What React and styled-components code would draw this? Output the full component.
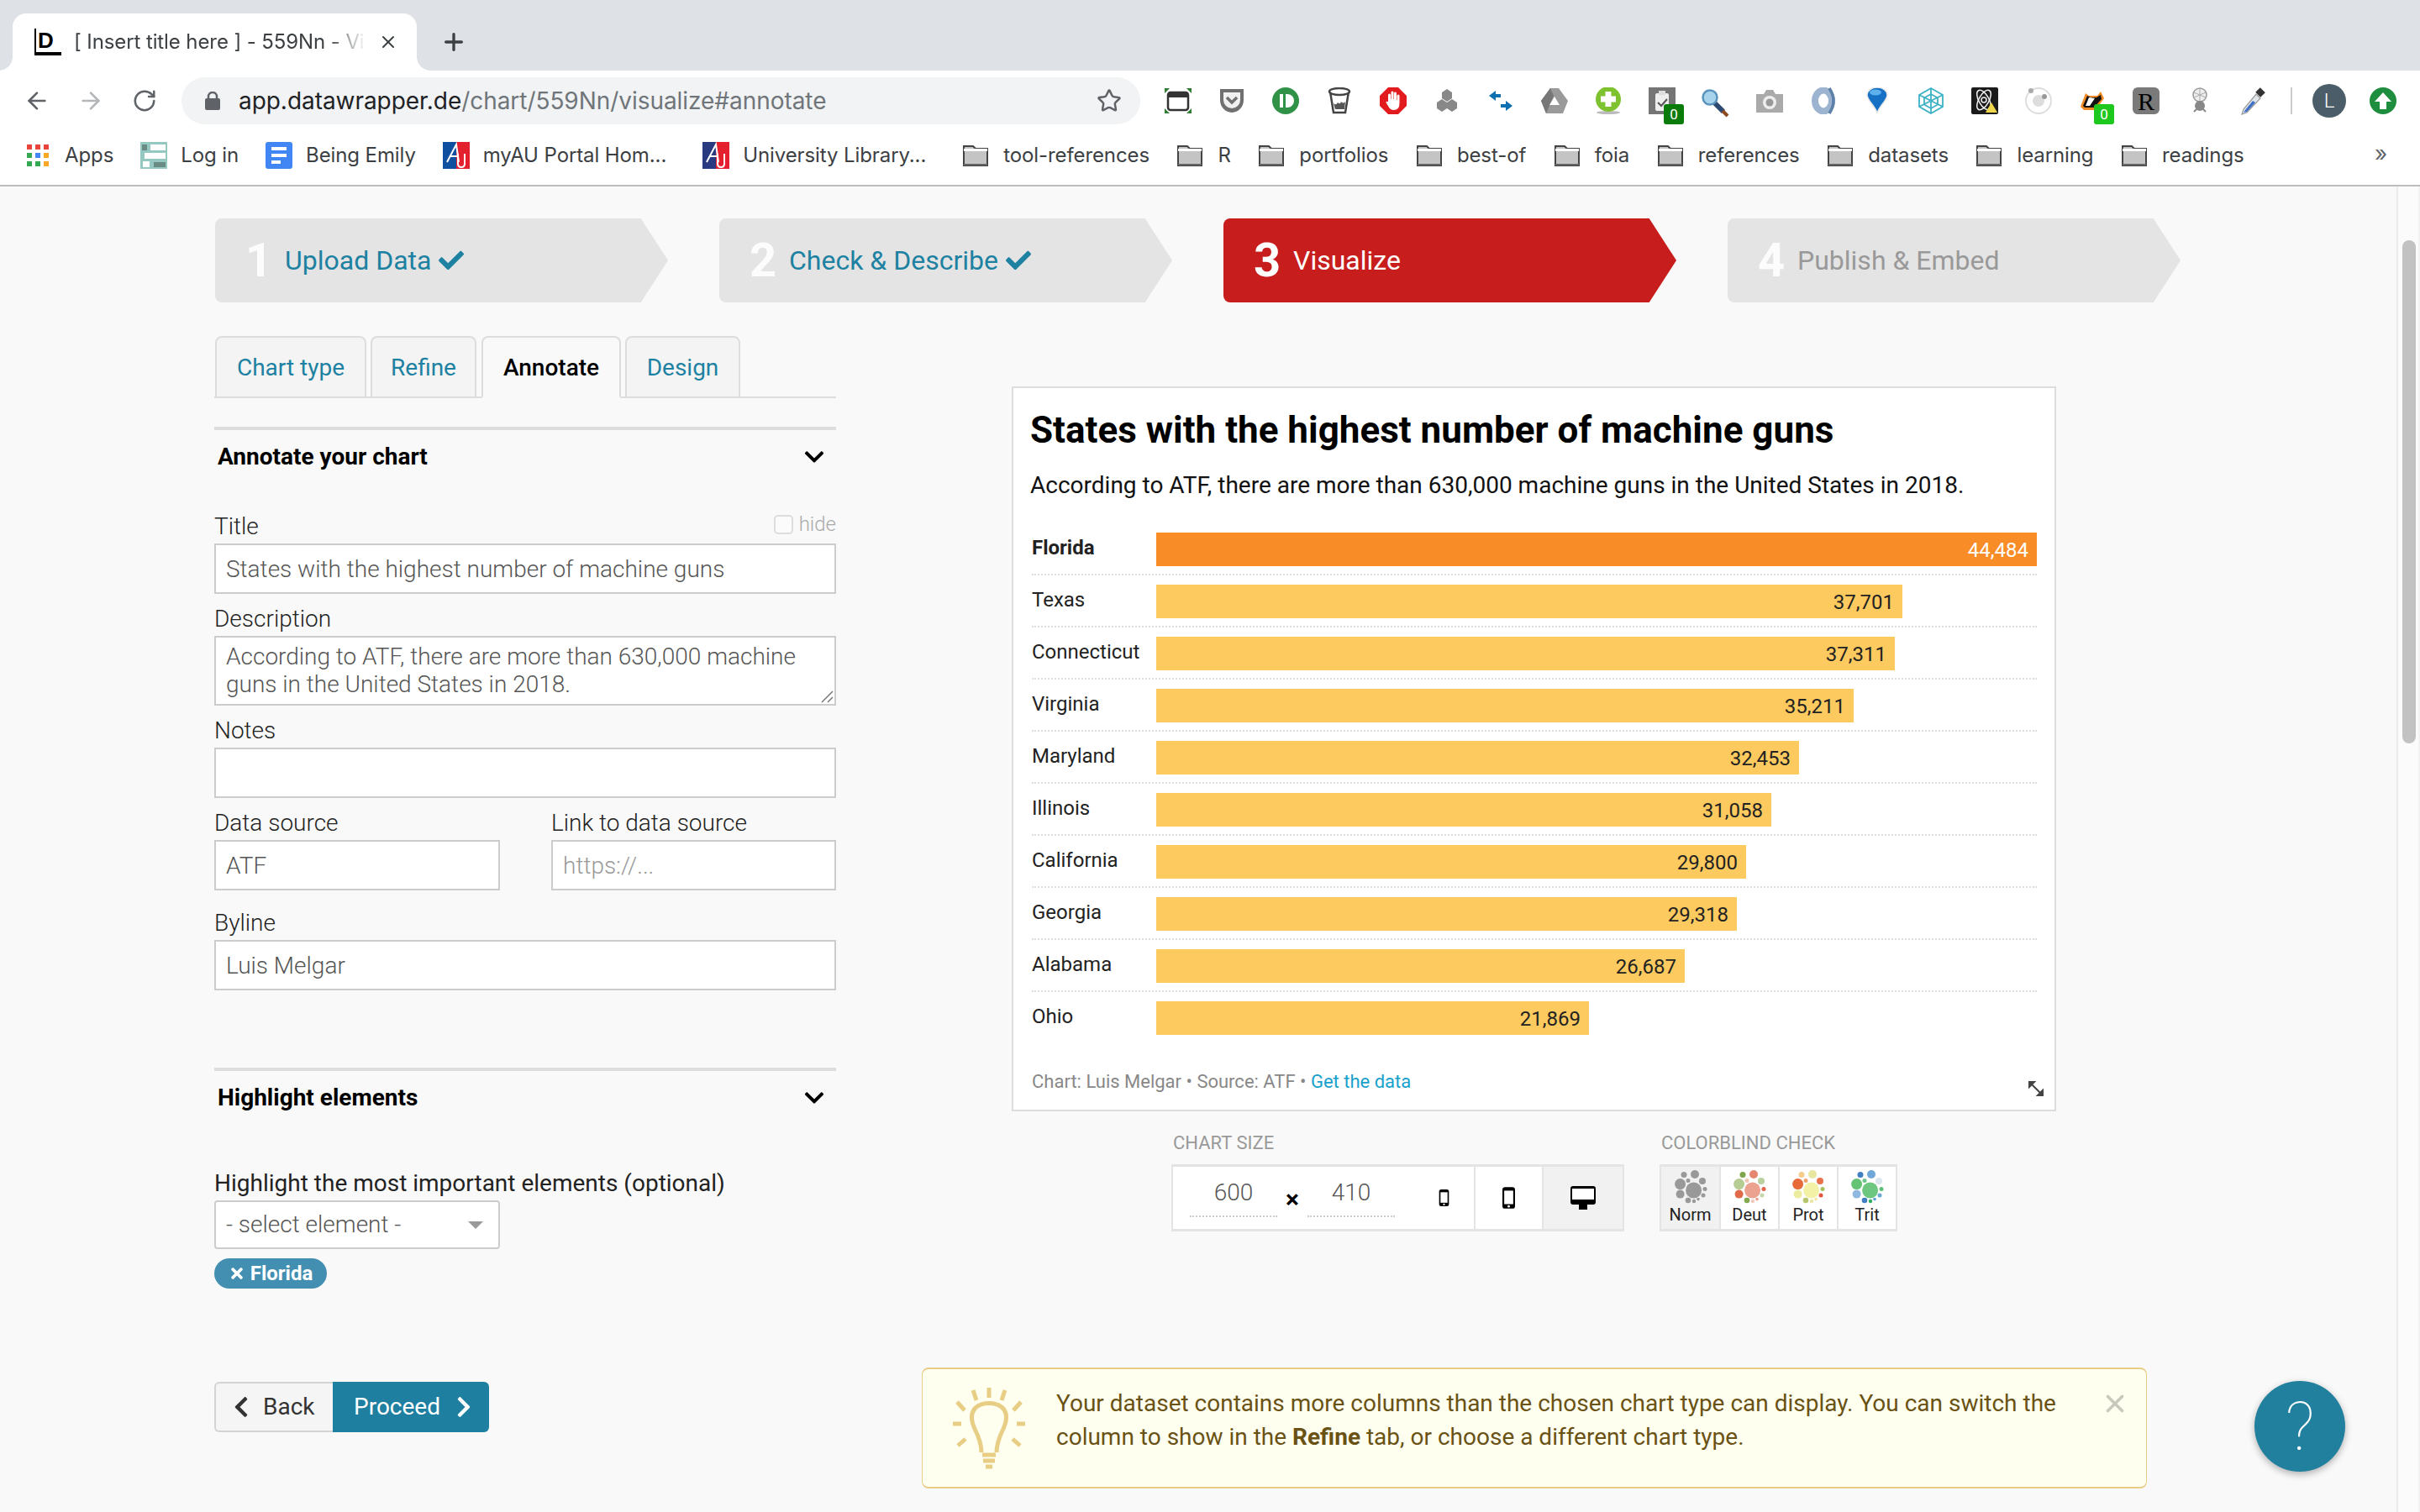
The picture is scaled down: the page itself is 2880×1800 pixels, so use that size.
import React from "react";
import styled, { createGlobalStyle } from "styled-components";
import { ArrowLeft, ArrowRight, RotateCw, Star, X, Plus } from "lucide-react";
import { FaCheck, FaChevronDown, FaChevronLeft, FaChevronRight, FaTimes } from "react-icons/fa";

const Global = createGlobalStyle`
  html, body { margin: 0; padding: 0; width: 2880px; height: 1800px; overflow: hidden; background: #f9f9f9; }
  * { box-sizing: border-box; }
  body { font-family: Roboto, "Liberation Sans", sans-serif; color: #222; }
`;

const Page = styled.div`
  width: 2880px; height: 1800px; display: flex; flex-direction: column; overflow: hidden;
`;

/* ---------- browser chrome ---------- */
const TabStrip = styled.div`
  height: 84px; background: #dee1e6; display: flex; align-items: flex-end; padding-left: 15px;
`;
const BrowserTab = styled.div`
  position: relative; width: 481px; height: 68px; background: #fff; border-radius: 16px 16px 0 0;
  display: flex; align-items: center; padding: 0 0 0 26px;
  &::before, &::after { content: ""; position: absolute; bottom: 0; width: 16px; height: 16px; }
  &::before { left: -16px; background: radial-gradient(circle at 0 0, transparent 15.5px, #fff 16px); }
  &::after { right: -16px; background: radial-gradient(circle at 100% 0, transparent 15.5px, #fff 16px); }
`;
const TabLogo = styled.span`
  width: 32px; height: 32px; border-left: 2px solid #000; border-bottom: 4px solid #000;
  font: 700 26px/28px "Liberation Sans", sans-serif; color: #000; padding-left: 2px; flex: none;
`;
const TabTitle = styled.span`
  width: 348px; margin-left: 15px; overflow: hidden; white-space: nowrap; font: 400 24px/30px Inter, sans-serif;
  letter-spacing: -0.1px; color: #3c4043; flex: none;
  -webkit-mask-image: linear-gradient(to right, #000 87%, transparent 100%);
  mask-image: linear-gradient(to right, #000 87%, transparent 100%);
`;
const TabClose = styled.span`
  margin-left: 14px; display: flex; color: #3c4043;
`;
const NewTab = styled.span`
  margin-left: 28px; margin-bottom: 18px; display: flex; color: #3c4043;
`;

const Toolbar = styled.div`
  height: 72px; background: #fff; display: flex; align-items: center; padding-left: 28px;
`;
const NavBtn = styled.span`
  width: 32px; display: flex; justify-content: center; margin-right: ${p => p.$mr || 32}px;
  color: ${p => p.$off ? "#b4b7ba" : "#5f6368"};
`;
const UrlBar = styled.div`
  width: 1141px; height: 56px; border-radius: 28px; background: #f1f3f4; display: flex; align-items: center;
  padding: 0 22px 0 28px; margin-right: 13px; flex: none; margin-left: -4px;
`;
const UrlText = styled.div`
  flex: 1; margin-left: 22px; font: 400 28px/36px Inter, sans-serif; letter-spacing: -0.05px; color: #202124; white-space: nowrap;
  span { color: #70757a; }
`;
const ExtSlot = styled.span`
  position: relative; width: ${p => p.$w || 64}px; height: 48px; display: flex; align-items: center; justify-content: center; flex: none;
`;
const ExtBadge = styled.span`
  position: absolute; left: 34px; top: 28px; width: 24px; height: 24px; border-radius: 3px;
  background: ${p => p.$c}; color: #fff; font: 400 17px/24px Roboto, sans-serif; text-align: center;
`;
const ToolSep = styled.span`
  width: 2px; height: 32px; background: #ccc; margin: 0 12px 0 12px; flex: none;
`;
const Avatar = styled.span`
  width: 40px; height: 40px; border-radius: 50%; background: #4a5d68; color: #fff;
  font: 300 24px/40px Roboto, sans-serif; text-align: center; margin: 0 12px 0 12px; flex: none;
`;

const BookmarkBar = styled.div`
  height: 66px; background: #fff; border-bottom: 2px solid #bdbdbd; display: flex; align-items: center; padding: 0 0 6px 31px;
  position: relative;
`;
const Bookmark = styled.span`
  display: flex; align-items: center; gap: ${p => p.$g || 18}px; margin-right: ${p => p.$mr || 32.5}px;
  font: 400 24px/30px Inter, sans-serif; letter-spacing: -0.1px; color: #3c4043; white-space: nowrap; flex: none;
`;
const MoreMarks = styled.span`
  position: absolute; left: 2826px; top: 12px; font: 400 26px/30px Inter, sans-serif; color: #5f6368;
`;

/* ---------- body ---------- */
const Body = styled.div`
  flex: 1; display: flex; min-height: 0;
`;
const Main = styled.main`
  flex: 1; min-width: 0; padding-top: 38px;
`;
const ScrollTrack = styled.div`
  width: 28px; background: #fbfbfb; border-left: 2px solid #ececec; border-right: 2px solid #f2f2f2; padding: 64px 0 0 5px; flex: none;
`;
const ScrollThumb = styled.div`
  height: 599px; background: #c2c2c2; border-radius: 8px; width: 16px;
`;

const Steps = styled.div`
  display: flex; gap: 61px; padding-left: 256px;
`;
const Step = styled.div`
  width: 539px; height: 100px; border-radius: 8px 0 0 8px; display: flex; align-items: center; padding-left: 36px;
  background: ${p => p.$active ? "#c71e1d" : "#e4e4e4"};
  clip-path: polygon(0 0, 94% 0, 100% 50%, 94% 100%, 0 100%);
`;
const StepNum = styled.span`
  width: 47px; font: 700 56px/60px Roboto, sans-serif; color: #fff; flex: none;
  opacity: ${p => p.$active ? 1 : .9};
`;
const StepLabel = styled.span`
  font: 400 32px/44px Roboto, sans-serif; display: flex; align-items: center; gap: 9px;
  color: ${p => p.$c};
`;

const Columns = styled.div`
  display: grid; grid-template-columns: 995px 1fr; height: 1228px; margin-top: 40px;
`;
const FormCol = styled.section`
  padding-left: 255px; display: flex; flex-direction: column;
`;
const Tabs = styled.div`
  display: flex; height: 74px; border-bottom: 2px solid #ddd; padding-left: 1px;
`;
const TabItem = styled.div`
  width: ${p => p.$w}px; margin-right: ${p => p.$gap}px; height: 74px; text-align: center; border: 2px solid #ddd; border-radius: 8px 8px 0 0;
  font: ${p => p.$active ? 500 : 400} 28px/72px Roboto, sans-serif; flex: none;
  background: ${p => p.$active ? "#f9f9f9" : "#f4f4f4"};
  border-bottom-color: ${p => p.$active ? "#f9f9f9" : "#ddd"};
  color: ${p => p.$active ? "#000" : "#1d81a2"};
`;
const Section = styled.div`
  margin-top: ${p => p.$mt}px; border-top: 4px solid #ddd; padding-top: 14px; height: 54px;
  display: flex; align-items: center; justify-content: space-between; padding-left: 4px; padding-right: 13px;
  font: 700 28px/36px Roboto, sans-serif; color: #000;
`;
const LabelRow = styled.div`
  display: flex; justify-content: space-between; height: 40px; margin-top: ${p => p.$mt || 0}px;
`;
const Label = styled.div`
  font: 400 28px/40px Roboto, sans-serif; font-weight: ${p => p.$w || 300}; color: #222; white-space: nowrap;
`;
const HideBox = styled.div`
  display: flex; align-items: center; gap: 7px; font: 300 24px/28px Roboto, sans-serif; color: #aaa; height: 28px; margin-top: 3px;
  i { width: 23px; height: 23px; border: 2px solid #ddd; border-radius: 5px; background: #fbfbfb; display: block; }
`;
const Field = styled.div`
  position: relative; height: ${p => p.$h || 60}px; width: ${p => p.$width || "100%"};
  background: #fff; border: 2px solid #ccc; padding: 0 12px;
  font: 300 28px/58px Roboto, sans-serif; color: ${p => p.$ph ? "#999" : "#555"}; white-space: nowrap;
`;
const AreaField = styled(Field)`
  padding-top: 6px; line-height: 33px; white-space: normal;
`;
const ResizeGrip = styled.svg`
  position: absolute; right: 1px; bottom: 1px;
`;
const TwoCol = styled.div`
  display: grid; grid-template-columns: 340px 339px; column-gap: 61px; margin-top: 10px;
`;
const SelectBox = styled(Field)`
  border-radius: 4px; display: flex; align-items: center; justify-content: space-between; padding-right: 18px; line-height: 54px;
  &::after { content: ""; border-left: 9px solid transparent; border-right: 9px solid transparent; border-top: 9px solid #999; }
`;
const Pill = styled.div`
  align-self: flex-start; width: 134px; height: 36px; margin-top: 11px; border-radius: 18px; background: #438fb1; color: #fff;
  font: 700 24px/36px Roboto, sans-serif; display: flex; align-items: center; justify-content: center; gap: 6px;
`;

/* ---------- chart ---------- */
const PreviewCol = styled.section`
  padding: 60px 0 0 209px;
`;
const ChartCard = styled.div`
  position: relative; width: 1243px; height: 863px; background: #fff; border: 2px solid #ddd; padding: 20px 20px 0 20px;
`;
const ChartTitle = styled.h1`
  margin: 0; font: 700 44px/60px Roboto, sans-serif; color: #000; white-space: nowrap;
`;
const ChartDesc = styled.p`
  margin: 16px 0 25px; font: 400 28px/40px Roboto, sans-serif; color: #111; white-space: nowrap;
`;
const Row = styled.div`
  height: 62px; margin-left: 2px; width: 1196px; display: flex; align-items: center; padding-top: 2px;
  border-bottom: 2px dotted ${p => p.$last ? "transparent" : "#ddd"};
`;
const RowLabel = styled.span`
  width: 148px; flex: none; font: ${p => p.$hl ? 700 : 400} 24px/30px Roboto, sans-serif; color: #222; margin-top: -4px;
`;
const Bar = styled.div`
  height: 40px; background: ${p => p.$hl ? "#f88d28" : "#fdca5f"}; display: flex; align-items: center; justify-content: flex-end;
  padding: 2px 10px 0 0; font: 400 24px/30px Roboto, sans-serif; color: ${p => p.$hl ? "#fff" : "#222"};
`;
const ChartFoot = styled.div`
  margin: 30px 0 0 2px; font: 400 22px/30px Roboto, sans-serif; color: #888;
  a { color: #18a1cd; text-decoration: none; }
`;
const ResizeIcon = styled.svg`
  position: absolute; right: 12px; bottom: 15px;
`;
const Controls = styled.div`
  display: flex; gap: 42px; padding-left: 190px; margin-top: 24px;
`;
const CtrlLabel = styled.div`
  font: 400 22px/28px Roboto, sans-serif; color: #999; height: 39px; padding-left: 2px;
`;
const SizeBox = styled.div`
  display: flex; height: 80px; border: 2px solid #e4e4e4; border-top-width: 3px; background: #fff; border-bottom-width: 3px;
`;
const SizeInputs = styled.div`
  width: 358px; display: flex; padding-left: 20px; align-items: flex-start;
`;
const SizeValue = styled.div`
  width: 104px; height: 60px; border-bottom: 2px dotted #ccc; text-align: center; font: 300 28px/62px Roboto, sans-serif; color: #555; flex: none;
`;
const Times = styled.div`
  width: 36px; text-align: center; font: 700 30px/78px Roboto, sans-serif; color: #000; flex: none;
`;
const SizeCell = styled.div`
  width: ${p => p.$w}px; display: flex; align-items: center; justify-content: center; flex: none;
  border-left: 2px solid #e4e4e4; background: ${p => p.$active ? "#f1f1f1" : "#fff"};
`;
const SmallPhoneSlot = styled.div`
  margin-left: auto; width: 72px; align-self: stretch; display: flex; align-items: center; justify-content: center; flex: none;
`;
const ColorBox = styled.div`
  display: flex; height: 80px; border: 2px solid #e4e4e4; border-top-width: 3px; border-bottom-width: 3px; background: #fff;
`;
const ColorCell = styled.div`
  width: ${p => p.$first ? 69 : 70}px; display: flex; flex-direction: column; align-items: center; padding-top: 4px;
  border-left: ${p => p.$first ? "0" : "2px solid #e4e4e4"}; background: ${p => p.$active ? "#f1f1f1" : "#fff"};
  font: 400 20px/24px Roboto, sans-serif; color: #222;
  svg { display: block; margin-bottom: 1px; }
`;

/* ---------- bottom ---------- */
const BottomRow = styled.div`
  display: flex; align-items: flex-start; padding-left: 255px;
`;
const BtnGroup = styled.div`
  display: flex; width: 842px; padding-top: 17px; flex: none;
`;
const BackBtn = styled.div`
  width: 141px; height: 60px; border: 2px solid #d4d4d4; border-right: 0; border-radius: 6px 0 0 6px; background: #f5f5f5;
  display: flex; align-items: center; gap: 12px; padding-left: 16px; font: 400 28px/36px Roboto, sans-serif; color: #333;
`;
const ProceedBtn = styled.div`
  width: 186px; height: 60px; border-radius: 0 6px 6px 0; background: #1f7fa1;
  display: flex; align-items: center; gap: 14px; padding-left: 25px; font: 400 28px/36px Roboto, sans-serif; color: #fff;
`;
const Alert = styled.div`
  position: relative; width: 1458px; height: 144px; background: #fffff0; border: 1px solid #e8ce85; border-top-width: 2px; border-bottom-width: 2px; border-radius: 8px;
  display: flex; padding: 21px 0 0 36px; flex: none;
`;
const AlertText = styled.div`
  width: 1200px; margin-left: 37px; font: 400 28px/40px Roboto, sans-serif; color: #6a5214; font-weight: 400;
  b { font-weight: 700; }
`;
const AlertClose = styled.span`
  margin-left: 43px; margin-top: 3px; display: flex; color: #c8c8bc;
`;
const HelpBtn = styled.div`
  width: 108px; height: 108px; border-radius: 50%; background: #22809f; margin: 16px 0 0 128px; flex: none;
  box-shadow: 0 3px 8px rgba(0,0,0,.3); color: #fff; font: 100 80px/110px Roboto, sans-serif; text-align: center;
`;

/* ---------- drawings ---------- */
const Folder = () => (
  <svg width="32" height="28" viewBox="0 0 32 28">
    <path d="M2 3h11l3 3h14v20H2z" fill="#c4c4c4" stroke="#444" strokeWidth="2" />
    <path d="M2 6h28v3H2z" fill="#fff" />
    <path d="M2 24h28v2H2z" fill="#666" />
  </svg>
);
const AppsIcon = () => (
  <svg width="28" height="28" viewBox="0 0 28 28">
    {["#e8453c","#e8453c","#e8453c","#34a853","#4285f4","#f9a825","#34a853","#34a853","#f9a825"].map((c,i)=>(
      <rect key={i} x={(i%3)*10+1} y={Math.floor(i/3)*10+1} width="6" height="6" fill={c}/>
    ))}
  </svg>
);
const LoginIcon = () => (
  <svg width="32" height="32" viewBox="0 0 32 32">
    <rect width="32" height="32" fill="#95c8c0"/>
    <rect x="12" y="3" width="18" height="7" fill="#fff"/><rect x="5" y="13" width="25" height="7" fill="#fff"/><rect x="3" y="23" width="8" height="7" fill="#fff"/>
    <rect x="2" y="3" width="6" height="7" fill="#6a8a84"/><rect x="16" y="24" width="14" height="6" fill="#6a8a84"/>
  </svg>
);
const DocIcon = () => (
  <svg width="32" height="32" viewBox="0 0 32 32">
    <rect width="32" height="32" rx="3" fill="#4285f4"/>
    <rect x="7" y="6" width="18" height="4" fill="#fff"/><rect x="7" y="14" width="18" height="4" fill="#fff"/><rect x="7" y="22" width="11" height="4" fill="#fff"/>
  </svg>
);
const AuIcon = ({ c }) => (
  <svg width="32" height="32" viewBox="0 0 32 32">
    <rect width="16" height="32" fill={c}/><rect x="16" width="16" height="32" fill="#e4202e"/>
    <path d="M5 24 L16 3 L19 24 M9 17h10" stroke="#fff" strokeWidth="2" fill="none"/>
    <path d="M18 14v12q0 4 4 4t4-4V14" stroke="#fff" strokeWidth="2" fill="none"/>
  </svg>
);

const Ext = {
  window: <svg width="32" height="30" viewBox="0 0 32 30"><path d="M0 0h6L0 6zM32 0h-6l6 6zM0 30h6l-6-6zM32 30h-6l6-6z" fill="#2e7d32"/><rect x="4" y="5" width="24" height="21" rx="3" fill="#fff" stroke="#333" strokeWidth="2.5"/><rect x="4" y="5" width="24" height="6" fill="#333"/></svg>,
  pocket: <svg width="32" height="30" viewBox="0 0 32 30"><path d="M2 1h28v13a14 15 0 0 1-28 0z" fill="#707070"/><path d="M6 5h20v9a10 10 0 0 1-20 0z" fill="#f0f0f0"/><path d="M10 11l6 6 6-6" fill="none" stroke="#707070" strokeWidth="3.5"/></svg>,
  pushb: <svg width="32" height="32" viewBox="0 0 32 32"><circle cx="16" cy="16" r="16" fill="#2f9247"/><rect x="9" y="8" width="4" height="16" fill="#fff"/><path d="M16 8h2a8 8 0 0 1 0 16h-2z" fill="#fff"/></svg>,
  cup: <svg width="28" height="32" viewBox="0 0 28 32"><path d="M3 5l4 25h14l4-25" fill="#fff" stroke="#444" strokeWidth="2.5"/><ellipse cx="14" cy="5" rx="12" ry="4" fill="#fff" stroke="#444" strokeWidth="2.5"/><path d="M7 19q3 3 5-1 3 3 4-1 3 3 5 0l-1 9H9z" fill="#555"/></svg>,
  stop: <svg width="32" height="32" viewBox="0 0 32 32"><path d="M10 0h12l10 10v12L22 32H10L0 22V10z" fill="#e21b1f"/><path d="M10 17V9a1.500 1.500 0 0 1 3 0v5h.5V6a1.500 1.500 0 0 1 3 0v8h.5V7a1.500 1.500 0 0 1 3 0v8h.5V10a1.500 1.500 0 0 1 3 0v9q0 8-7 8-4 0-6-4l-3-5q0-2 2-1z" fill="#fff"/></svg>,
  hex: <svg width="24" height="30" viewBox="0 0 24 30"><path d="M12 1l6 4v7l-6 4-6-4V5zM6 13l6 4v7l-6 4-6-4v-7zM18 13l6 4v7l-6 4-6-4v-7z" fill="#888"/></svg>,
  arrows: <svg width="28" height="24" viewBox="0 0 28 24"><path d="M0 6l8-6v4h6v4H8v4zM28 18l-8-6v4h-6v4h6v4z" fill="#0b6fb0"/></svg>,
  drive: <svg width="32" height="30" viewBox="0 0 32 30"><path d="M11 0h10l11 15-6 15H6L0 15z" fill="#9a9a9a"/><path d="M11 0L0 15l6 15 9-21z" fill="#777"/><path d="M16 10l6 10H10z" fill="#fff"/></svg>,
  plus: <svg width="32" height="32" viewBox="0 0 32 32"><ellipse cx="16" cy="30" rx="14" ry="2" fill="#bbb"/><circle cx="16" cy="14" r="15" fill="#7fc22f"/><path d="M12.500 5h7v5.500H25v7h-5.500V23h-7v-5.500H7v-7h5.500z" fill="#fff"/></svg>,
  clip: <svg width="32" height="32" viewBox="0 0 32 32"><rect width="32" height="32" fill="#757575"/><rect x="8" y="7" width="16" height="21" rx="2" fill="#eee"/><rect x="12" y="4" width="8" height="5" fill="#ddd"/><path d="M11 18l4 4 7-8" fill="none" stroke="#555" strokeWidth="2"/></svg>,
  loupe: <svg width="34" height="34" viewBox="0 0 34 34" style={{ marginTop: 6 }}><path d="M15 16l11 11" stroke="#2c4a72" strokeWidth="6"/><path d="M25 26l6 6" stroke="#8f4a22" strokeWidth="4"/><circle cx="10" cy="10" r="8.500" fill="#a8d3ec" stroke="#5a93bd" strokeWidth="2.500"/></svg>,
  camera: <svg width="32" height="28" viewBox="0 0 32 28"><path d="M0 6h9l3-5h8l3 5h9v22H0z" fill="#aaa"/><circle cx="16" cy="16" r="8" fill="#eee"/><circle cx="16" cy="16" r="4.500" fill="#999"/></svg>,
  ring: <svg width="30" height="32" viewBox="0 0 30 32"><ellipse cx="15" cy="16" rx="10" ry="12.500" fill="none" stroke="#9db4d1" strokeWidth="8"/><path d="M22 1q10 15 0 30" fill="none" stroke="#5d80a8" strokeWidth="3.500"/></svg>,
  balloon: <svg width="26" height="32" viewBox="0 0 26 32"><path d="M13 31C11 22 1 16 1 9a12 9 0 0 1 24 0c0 7-10 13-12 22z" fill="#1671c4" stroke="#e8e8e8" strokeWidth="1.500"/><ellipse cx="11" cy="6" rx="7" ry="3.500" fill="#5db2ee"/></svg>,
  web: <svg width="32" height="32" viewBox="0 0 32 32" fill="none" stroke="#3fb2c6" strokeWidth="1.800"><path d="M16 1l14 8v14l-14 8-14-8V9z"/><path d="M16 8l8 4.500v8L16 25l-8-4.500v-8z"/><path d="M16 1v30M2 9l28 14M30 9L2 23"/></svg>,
  atom: <svg width="32" height="32" viewBox="0 0 32 32"><rect width="32" height="32" rx="2" fill="#1b1b1b"/><g fill="none" stroke="#eee" strokeWidth="1.500"><ellipse cx="15" cy="15" rx="6" ry="13" transform="rotate(30 15 15)"/><ellipse cx="15" cy="15" rx="6" ry="13" transform="rotate(-30 15 15)"/><circle cx="15" cy="15" r="3"/></g><path d="M24 18l7 12H17z" fill="#f0d64b"/></svg>,
  orbit: <svg width="32" height="32" viewBox="0 0 32 32"><circle cx="16" cy="16" r="15" fill="none" stroke="#ddd" strokeWidth="2"/><circle cx="16" cy="16" r="7" fill="#ddd"/><circle cx="7" cy="4" r="3" fill="#aaa"/><circle cx="23" cy="11" r="3" fill="#999"/></svg>,
  badger: <svg width="32" height="30" viewBox="0 0 32 30"><path d="M2 22L8 6l4 3h10l4-5 4 8-10 14H6z" fill="#f08a24"/><path d="M5 21L10 9l4 2h7l5-3 1 5-9 10H7z" fill="#111"/><path d="M12 11l7 1-6 9H8z" fill="#fff"/></svg>,
  spider: <svg width="24" height="32" viewBox="0 0 24 32"><circle cx="12" cy="9" r="8" fill="#eee" stroke="#999" strokeWidth="1.500"/><path d="M12 1v16M5 6l14 6M19 6L5 12" stroke="#aaa" strokeWidth="1"/><circle cx="12" cy="22" r="6" fill="#888"/><path d="M5 29l3-3M19 29l-3-3" stroke="#888" strokeWidth="2"/></svg>,
  dropper: <svg width="32" height="36" viewBox="0 0 32 36"><path d="M21 5l6 6" stroke="#333" strokeWidth="8"/><path d="M19 10L4 28l-2 6 6-2 16-17z" fill="#dfe5ea" stroke="#999" strokeWidth="1.200"/><path d="M15 18L6 29l-2 3 4-1 10-11z" fill="#3e6fc6"/></svg>,
  up: <svg width="32" height="32" viewBox="0 0 32 32"><circle cx="16" cy="16" r="16" fill="#1e8e3e"/><path d="M16 6l10 11h-6v9h-8v-9H6z" fill="#fff"/></svg>,
};

const Bulb = () => (
  <svg width="86" height="98" viewBox="0 0 86 98" fill="none" stroke="#e8ce85">
    <path d="M34 78c0-8-2-16-8-28-5-11-5-20 2-26 8-6 22-6 30 0 7 6 7 15 2 26-6 12-8 20-8 28" strokeWidth="5"/>
    <path d="M35 81h16M36 88h14M39 95h8" strokeWidth="5"/>
    <path d="M43 1v12M24 4l4 12M62 4l-4 12M5 18l9 10M81 18l-9 10M0 44h10M76 44h10M6 70l9-8M80 70l-9-8" strokeWidth="5"/>
  </svg>
);

const bubbles = [
  [23.6,24,9.5],[25,5,5],[12,5.5,3.500],[34,13,4],[7.6,16.6,6.500],[7.6,28.6,5],
  [17,12.6,2.500],[37,22.6,2.500],[35,30,2.500],[17,36,3.300],[24,37,2.200],[29,34.6,1.800],
];
const palettes = {
  Norm: Array(12).fill("#999"),
  Deut: ["#eba390","#e58770","#7ea44c","#b9d19e","#b6cc93","#e06a4a","#efc6b6","#e0634a","#c5d6a8","#82a94b","#f3c9bd","#ee9c8b"],
  Prot: ["#f2f1a6","#e6e69e","#f5cd8d","#e8704a","#e66a3a","#ecec9e","#f0a36a","#a4c05a","#e8553f","#b5c66d","#e9e9a5","#f5e69b"],
  Trit: ["#6dc780","#6fa8d8","#3f7fc2","#dce6ef","#64c374","#8fb9e0","#6fc58a","#5fbe78","#69a9d4","#3f7fc2","#30b060","#5aa0d8"],
};
const Cluster = ({ name }) => (
  <svg width="40" height="40" viewBox="0 0 40 40">
    {bubbles.map(([x,y,r],i)=><circle key={i} cx={x} cy={y} r={r} fill={palettes[name][i]}/>)}
  </svg>
);
const Phone = ({ w, h }) => (
  <svg width={w} height={h} viewBox="0 0 14 24"><rect width="14" height="24" rx="3" fill="#000"/><rect x="2" y="4" width="10" height="15" fill="#fff"/><circle cx="7" cy="21.500" r="1.300" fill="#fff"/></svg>
);
const Desktop = () => (
  <svg width="30" height="28" viewBox="0 0 30 28"><rect width="30" height="22" rx="3" fill="#000"/><rect x="2" y="3" width="26" height="13" fill="#fff"/><rect x="10" y="22" width="10" height="6" fill="#000"/></svg>
);

const data = [
  ["Florida",44484],["Texas",37701],["Connecticut",37311],["Virginia",35211],["Maryland",32453],
  ["Illinois",31058],["California",29800],["Georgia",29318],["Alabama",26687],["Ohio",21869],
];
const MAX_W = 1048;
const blue = "#1d81a2";

export default function App() {
  return (
    <Page>
      <Global />
      <TabStrip>
        <BrowserTab>
          <TabLogo>D</TabLogo>
          <TabTitle>[ Insert title here ] - 559Nn - Visualize</TabTitle>
          <TabClose><X size={24} strokeWidth={2} /></TabClose>
        </BrowserTab>
        <NewTab><Plus size={32} strokeWidth={2.5} /></NewTab>
      </TabStrip>
      <Toolbar>
        <NavBtn><ArrowLeft size={32} strokeWidth={2} /></NavBtn>
        <NavBtn $off><ArrowRight size={32} strokeWidth={2} /></NavBtn>
        <NavBtn $mr={32}><RotateCw size={30} strokeWidth={2} /></NavBtn>
        <UrlBar>
          <svg width="18" height="22" viewBox="0 0 18 22"><rect y="8" width="18" height="14" rx="2" fill="#5f6368"/><path d="M4 9V6a5 5 0 0 1 10 0v3" fill="none" stroke="#5f6368" strokeWidth="2.500"/></svg>
          <UrlText>app.datawrapper.de<span>/chart/559Nn/visualize#annotate</span></UrlText>
          <Star size={30} strokeWidth={2} color="#5f6368" />
        </UrlBar>
        <ExtSlot>{Ext.window}</ExtSlot>
        <ExtSlot>{Ext.pocket}</ExtSlot>
        <ExtSlot>{Ext.pushb}</ExtSlot>
        <ExtSlot>{Ext.cup}</ExtSlot>
        <ExtSlot>{Ext.stop}</ExtSlot>
        <ExtSlot>{Ext.hex}</ExtSlot>
        <ExtSlot>{Ext.arrows}</ExtSlot>
        <ExtSlot>{Ext.drive}</ExtSlot>
        <ExtSlot>{Ext.plus}</ExtSlot>
        <ExtSlot>{Ext.clip}<ExtBadge $c="#0a7a0a">0</ExtBadge></ExtSlot>
        <ExtSlot>{Ext.loupe}</ExtSlot>
        <ExtSlot>{Ext.camera}</ExtSlot>
        <ExtSlot>{Ext.ring}</ExtSlot>
        <ExtSlot>{Ext.balloon}</ExtSlot>
        <ExtSlot>{Ext.web}</ExtSlot>
        <ExtSlot>{Ext.atom}</ExtSlot>
        <ExtSlot>{Ext.orbit}</ExtSlot>
        <ExtSlot>{Ext.badger}<ExtBadge $c="#1fc81f">0</ExtBadge></ExtSlot>
        <ExtSlot>
          <svg width="32" height="32" viewBox="0 0 32 32"><rect width="32" height="32" rx="6" fill="#7a7a7a"/><text x="16" y="27" textAnchor="middle" fontFamily="Liberation Serif, serif" fontSize="30" fill="#000">R</text></svg>
        </ExtSlot>
        <ExtSlot>{Ext.spider}</ExtSlot>
        <ExtSlot>{Ext.dropper}</ExtSlot>
        <ToolSep />
        <Avatar>L</Avatar>
        <ExtSlot $w={64}>{Ext.up}</ExtSlot>
      </Toolbar>
      <BookmarkBar>
        <Bookmark $mr={32}><AppsIcon />Apps</Bookmark>
        <Bookmark $g={16} $mr={32}><LoginIcon />Log in</Bookmark>
        <Bookmark $g={16} $mr={32}><DocIcon />Being Emily</Bookmark>
        <Bookmark $g={16} $mr={43}><AuIcon c="#0f4fa0" />myAU Portal Hom...</Bookmark>
        <Bookmark $g={16} $mr={43}><AuIcon c="#2a3a80" />University Library...</Bookmark>
        <Bookmark $g={17}><Folder />tool-references</Bookmark>
        <Bookmark $g={17}><Folder />R</Bookmark>
        <Bookmark $g={17}><Folder />portfolios</Bookmark>
        <Bookmark $g={17}><Folder />best-of</Bookmark>
        <Bookmark $g={17}><Folder />foia</Bookmark>
        <Bookmark $g={17}><Folder />references</Bookmark>
        <Bookmark $g={17}><Folder />datasets</Bookmark>
        <Bookmark $g={17}><Folder />learning</Bookmark>
        <Bookmark $g={17}><Folder />readings</Bookmark>
        <MoreMarks>»</MoreMarks>
      </BookmarkBar>

      <Body>
        <Main>
          <Steps>
            <Step><StepNum>1</StepNum><StepLabel $c={blue}>Upload Data <FaCheck size={30} /></StepLabel></Step>
            <Step><StepNum>2</StepNum><StepLabel $c={blue}>Check &amp; Describe <FaCheck size={30} /></StepLabel></Step>
            <Step $active><StepNum $active>3</StepNum><StepLabel $c="#fff">Visualize</StepLabel></Step>
            <Step><StepNum>4</StepNum><StepLabel $c="#999">Publish &amp; Embed</StepLabel></Step>
          </Steps>

          <Columns>
            <FormCol>
              <Tabs>
                <TabItem $w={180} $gap={5}>Chart type</TabItem>
                <TabItem $w={126} $gap={6}>Refine</TabItem>
                <TabItem $w={166} $gap={5} $active>Annotate</TabItem>
                <TabItem $w={137} $gap={0}>Design</TabItem>
              </Tabs>
              <Section $mt={34}>Annotate your chart <FaChevronDown size={26} /></Section>
              <LabelRow $mt={45}><Label>Title</Label><HideBox><i />hide</HideBox></LabelRow>
              <Field>States with the highest number of machine guns</Field>
              <LabelRow $mt={10}><Label>Description</Label></LabelRow>
              <AreaField $h={83}>
                According to ATF, there are more than 630,000 machine guns in the United States in 2018.
                <ResizeGrip width="16" height="16" viewBox="0 0 16 16"><path d="M2 15L15 2M9 15l6-6" stroke="#777" strokeWidth="1.500"/></ResizeGrip>
              </AreaField>
              <LabelRow $mt={10}><Label>Notes</Label></LabelRow>
              <Field />
              <TwoCol>
                <div><LabelRow><Label>Data source</Label></LabelRow><Field>ATF</Field></div>
                <div><LabelRow><Label>Link to data source</Label></LabelRow><Field $ph>https://...</Field></div>
              </TwoCol>
              <LabelRow $mt={19}><Label>Byline</Label></LabelRow>
              <Field>Luis Melgar</Field>
              <Section $mt={92}>Highlight elements <FaChevronDown size={26} /></Section>
              <LabelRow $mt={64}><Label $w={400}>Highlight the most important elements (optional)</Label></LabelRow>
              <SelectBox $width="340px" $h={58}>- select element -</SelectBox>
              <Pill><FaTimes size={20} /> Florida</Pill>
            </FormCol>

            <PreviewCol>
              <ChartCard>
                <ChartTitle>States with the highest number of machine guns</ChartTitle>
                <ChartDesc>According to ATF, there are more than 630,000 machine guns in the United States in 2018.</ChartDesc>
                {data.map(([name, v], i) => (
                  <Row key={name} $last={i === data.length - 1}>
                    <RowLabel $hl={i === 0}>{name}</RowLabel>
                    <Bar $hl={i === 0} style={{ width: Math.round(v / 44484 * MAX_W) }}>{v.toLocaleString("en-US")}</Bar>
                  </Row>
                ))}
                <ChartFoot>Chart: Luis Melgar • Source: ATF • <a>Get the data</a></ChartFoot>
                <ResizeIcon width="20" height="20" viewBox="0 0 20 20"><path d="M2 2l6 0-6 6zM18 18h-6l6-6zM4 4l12 12" fill="#444" stroke="#444" strokeWidth="2"/></ResizeIcon>
              </ChartCard>
              <Controls>
                <div>
                  <CtrlLabel>CHART SIZE</CtrlLabel>
                  <SizeBox>
                    <SizeInputs>
                      <SizeValue>600</SizeValue>
                      <Times>×</Times>
                      <SizeValue>410</SizeValue>
                      <SmallPhoneSlot><Phone w={13} h={20} /></SmallPhoneSlot>
                    </SizeInputs>
                    <SizeCell $w={81}><Phone w={15} h={26} /></SizeCell>
                    <SizeCell $w={96} $active><Desktop /></SizeCell>
                  </SizeBox>
                </div>
                <div>
                  <CtrlLabel>COLORBLIND CHECK</CtrlLabel>
                  <ColorBox>
                    {Object.keys(palettes).map((n, i) => (
                      <ColorCell key={n} $first={i === 0} $active={i === 0}><Cluster name={n} />{n}</ColorCell>
                    ))}
                  </ColorBox>
                </div>
              </Controls>
            </PreviewCol>
          </Columns>

          <BottomRow>
            <BtnGroup>
              <BackBtn><FaChevronLeft size={28} /> Back</BackBtn>
              <ProceedBtn>Proceed <FaChevronRight size={28} /></ProceedBtn>
            </BtnGroup>
            <Alert>
              <Bulb />
              <AlertText>Your dataset contains more columns than the chosen chart type can display. You can switch the column to show in the <b>Refine</b> tab, or choose a different chart type.</AlertText>
              <AlertClose><X size={34} strokeWidth={2.5} /></AlertClose>
            </Alert>
            <HelpBtn>?</HelpBtn>
          </BottomRow>
        </Main>
        <ScrollTrack><ScrollThumb /></ScrollTrack>
      </Body>
    </Page>
  );
}
